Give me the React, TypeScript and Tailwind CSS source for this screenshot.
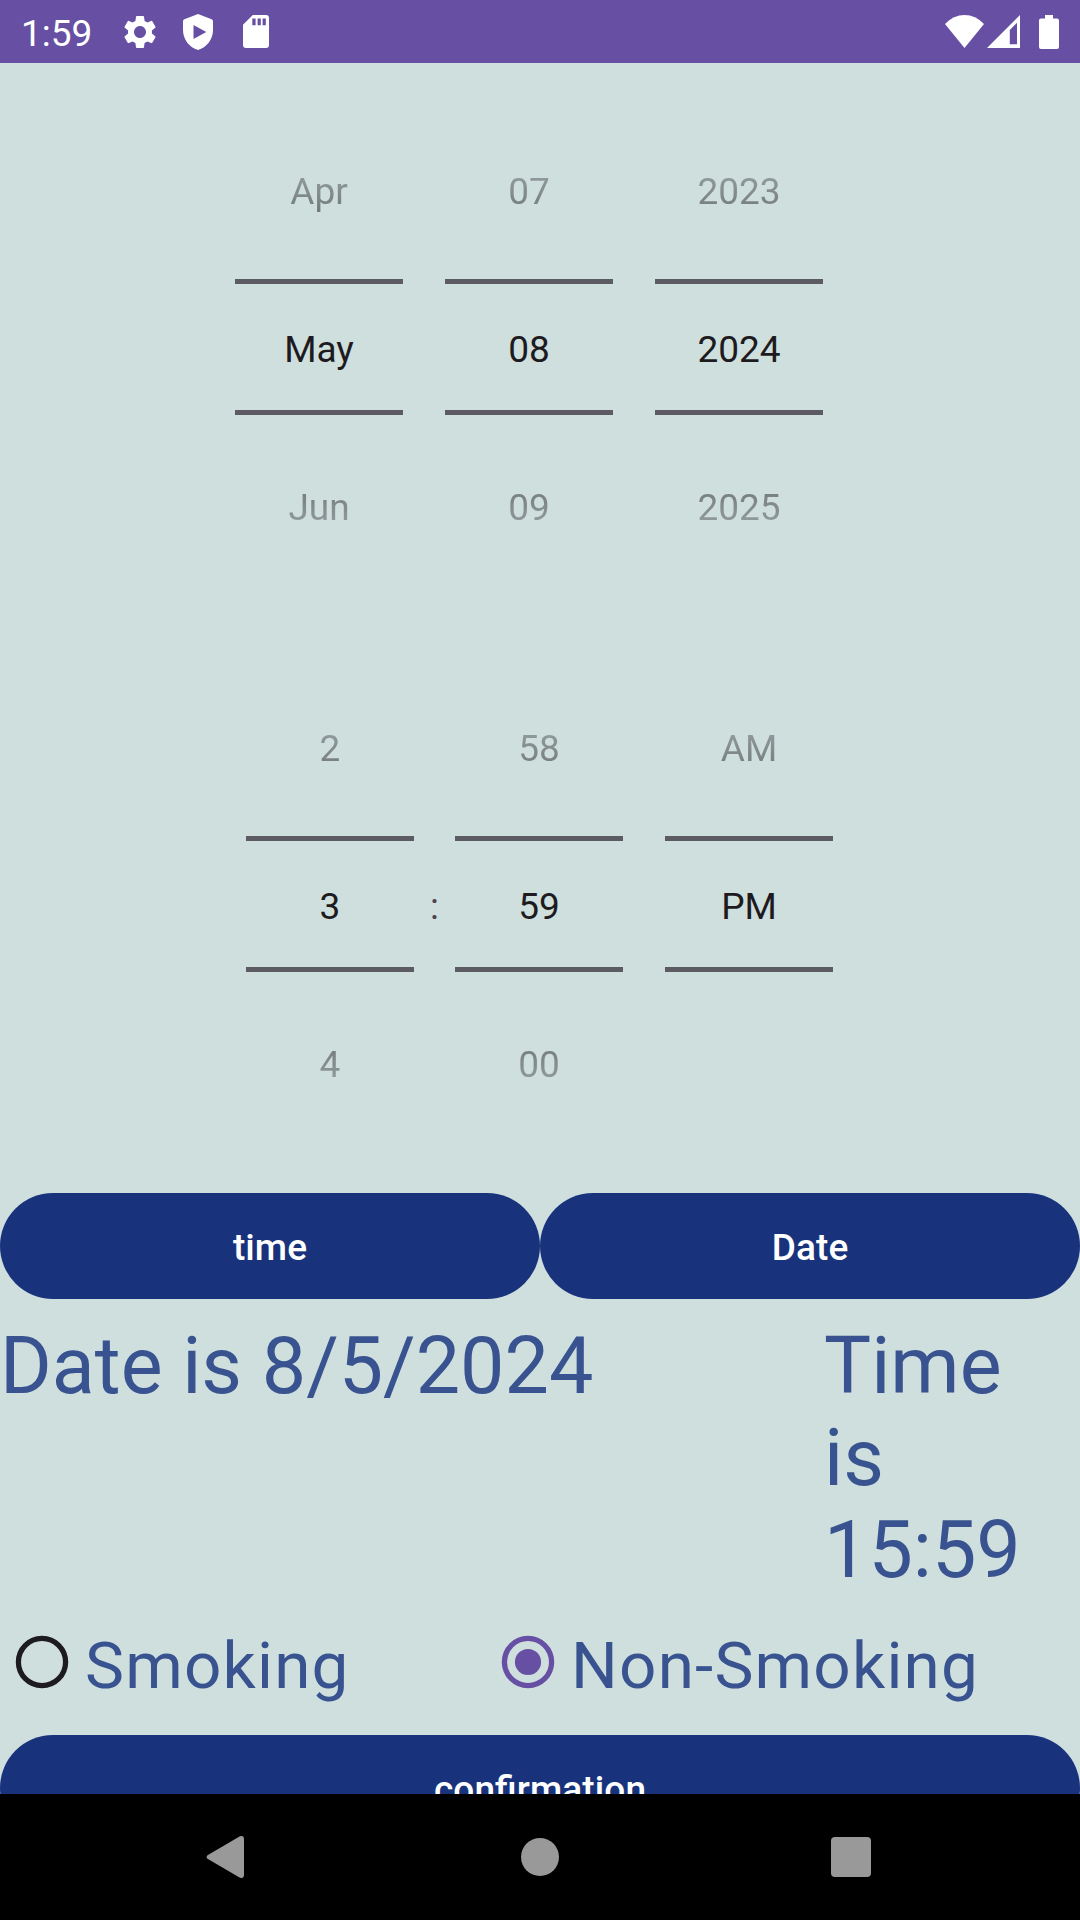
import React from "react";

type Column = { prev: string; current: string; next: string };

const dateColumns: Column[] = [
  { prev: "Apr", current: "May", next: "Jun" },
  { prev: "07", current: "08", next: "09" },
  { prev: "2023", current: "2024", next: "2025" },
];

function PickerColumn({ prev, current, next }: Column) {
  return (
    <div className="flex w-[168px] flex-col text-center text-[37px] text-[#1d1b20]">
      <div className="h-[158px] pt-px leading-[158px] [mask-image:linear-gradient(to_bottom,rgba(0,0,0,0.04),rgba(0,0,0,0.8))]">
        {prev}
      </div>
      <div className="mt-[9px] h-[136px] border-y-[5px] border-[#5c5b63] pt-[5px] leading-[121px]">
        {current}
      </div>
      <div className="mt-[14px] h-[158px] leading-[158px] [mask-image:linear-gradient(to_top,rgba(0,0,0,0.04),rgba(0,0,0,0.8))]">
        {next}
      </div>
    </div>
  );
}

function PillButton({ label }: { label: string }) {
  return (
    <button className="h-[106px] flex-1 rounded-full bg-[#18337b] pt-[3px] text-[37px] leading-[103px] font-medium tracking-[0.1px] text-white [font-feature-settings:'liga']">
      {label}
    </button>
  );
}

function RadioOption({ label, checked }: { label: string; checked?: boolean }) {
  const color = checked ? "#6750a4" : "#1d1b20";
  return (
    <label className="flex h-[126px] items-center text-[65.6px] tracking-[1.22px] text-[#38538f]">
      <svg className="h-[84px] w-[84px] shrink-0" viewBox="0 0 84 84">
        <circle cx="42" cy="42" r="23.6" fill="none" stroke={color} strokeWidth="5.25" />
        {checked && <circle cx="42" cy="42" r="13.1" fill={color} />}
      </svg>
      <span className="pt-[7px] pl-px leading-[77px]">{label}</span>
    </label>
  );
}

function StatusBar() {
  return (
    <header className="flex h-[63px] shrink-0 items-center bg-[#6750a4] pr-[21px] pl-[21px] text-white">
      <span className="w-[99px] pt-[3px] text-[37px] leading-[43px]">1:59</span>
      <svg className="h-[40px] w-[40px]" viewBox="0 0 24 24" fill="currentColor">
        <path d="M19.14 12.94c.04-.3.06-.61.06-.94 0-.32-.02-.64-.07-.94l2.03-1.58c.18-.14.23-.41.12-.61l-1.92-3.32c-.12-.22-.37-.29-.59-.22l-2.39.96c-.5-.38-1.03-.7-1.62-.94l-.36-2.54c-.04-.24-.24-.41-.48-.41h-3.84c-.24 0-.43.17-.47.41l-.36 2.54c-.59.24-1.13.57-1.62.94l-2.39-.96c-.22-.08-.47 0-.59.22L2.74 8.87c-.12.21-.08.47.12.61l2.03 1.58c-.05.3-.09.63-.09.94s.02.64.07.94l-2.03 1.58c-.18.14-.23.41-.12.61l1.92 3.32c.12.22.37.29.59.22l2.39-.96c.5.38 1.03.7 1.62.94l.36 2.54c.05.24.24.41.48.41h3.84c.24 0 .44-.17.47-.41l.36-2.54c.59-.24 1.13-.56 1.62-.94l2.39.96c.22.08.47 0 .59-.22l1.92-3.32c.12-.22.07-.47-.12-.61l-2.01-1.58zM12 15.6c-1.98 0-3.6-1.62-3.6-3.6s1.62-3.6 3.6-3.6 3.6 1.62 3.6 3.6-1.62 3.6-3.6 3.6z" />
      </svg>
      <svg className="ml-[23px] h-[36px] w-[30px]" viewBox="0 0 30 36" fill="currentColor" fillRule="evenodd">
        <path d="M15 0L28.6 5.2Q30 5.8 30 7.4V16C30 25.5 23.5 33.5 15 36C6.500 33.500 0 25.500 0 16V7.400Q0 5.800 1.400 5.200ZM10.500 11V25L23.300 18Z" />
      </svg>
      <svg className="ml-[30px] h-[33px] w-[26px]" viewBox="0 0 26 33" fill="currentColor" fillRule="evenodd">
        <path d="M9.800 0H23Q26 0 26 3V30Q26 33 23 33H3Q0 33 0 30V9.800ZM9.300 3.500V10.300H12.600V3.500ZM14.600 3.500V10.300H17.800V3.500ZM19.600 3.500V10.300H22.800V3.500Z" />
      </svg>
      <svg className="ml-auto h-[33px] w-[39px]" viewBox="0 0 39 33" fill="currentColor">
        <path d="M19.500 33L0 9Q8.500 0 19.500 0T39 9Z" />
      </svg>
      <svg className="ml-[3px] h-[33px] w-[33px]" viewBox="0 0 33 33" fill="currentColor" fillRule="evenodd">
        <path d="M33 0V33H0ZM30 7.800L22.800 15V29.300H30Z" />
      </svg>
      <svg className="ml-[19px] h-[34px] w-[20px]" viewBox="0 0 20 34" fill="currentColor">
        <path d="M6 0H14V3.500H18Q20 3.500 20 5.500V32Q20 34 18 34H2Q0 34 0 32V5.500Q0 3.500 2 3.500H6Z" />
      </svg>
    </header>
  );
}

function NavigationBar() {
  return (
    <nav className="flex h-[126px] shrink-0 items-center bg-black pl-[206px] text-[#999999]">
      <svg className="h-[42px] w-[38px]" viewBox="0 0 38 42" fill="currentColor">
        <path d="M1.500 19.200L33.500 .4Q38 -1.200 38 3V39Q38 43.200 33.500 41.600L1.500 22.800Q-.3 21 1.500 19.200Z" />
      </svg>
      <div className="ml-[277px] h-[38px] w-[38px] rounded-full bg-[#999999]" />
      <div className="ml-[272px] h-[40px] w-[40px] rounded-[4px] bg-[#999999]" />
    </nav>
  );
}

export default function App() {
  return (
    <div className="flex h-[1920px] w-[1080px] flex-col overflow-hidden bg-[#cfdfde] font-['Roboto',sans-serif]">
      <StatusBar />
      <main className="flex min-h-0 flex-1 flex-col overflow-hidden">
        <section className="flex h-[557px] shrink-0 gap-[42px] pt-[49px] pl-[235px]">
          {dateColumns.map((column) => (
            <PickerColumn key={column.current} {...column} />
          ))}
        </section>
        <section className="flex h-[573px] shrink-0 pt-[49px] pl-[246px]">
          <PickerColumn prev="2" current="3" next="4" />
          <div className="w-[41px] pt-[159px] text-center text-[36.75px] leading-[158px] text-[#49454f]">:</div>
          <PickerColumn prev="58" current="59" next="00" />
          <div className="w-[42px]" />
          <PickerColumn prev="AM" current="PM" next="" />
        </section>
        <div className="flex shrink-0">
          <PillButton label="time" />
          <PillButton label="Date" />
        </div>
        <div className="mt-[21px] flex h-[279px] shrink-0 text-[79px] leading-[92px] text-[#38538f]">
          <p className="w-[824px]">Date is 8/5/2024</p>
          <p className="w-[200px]">Time is 15:59</p>
        </div>
        <div className="flex shrink-0">
          <div className="w-[486px]">
            <RadioOption label="Smoking" />
          </div>
          <RadioOption label="Non-Smoking" checked />
        </div>
        <div className="mt-[10px] flex shrink-0">
          <PillButton label="confirmation" />
        </div>
      </main>
      <NavigationBar />
    </div>
  );
}
